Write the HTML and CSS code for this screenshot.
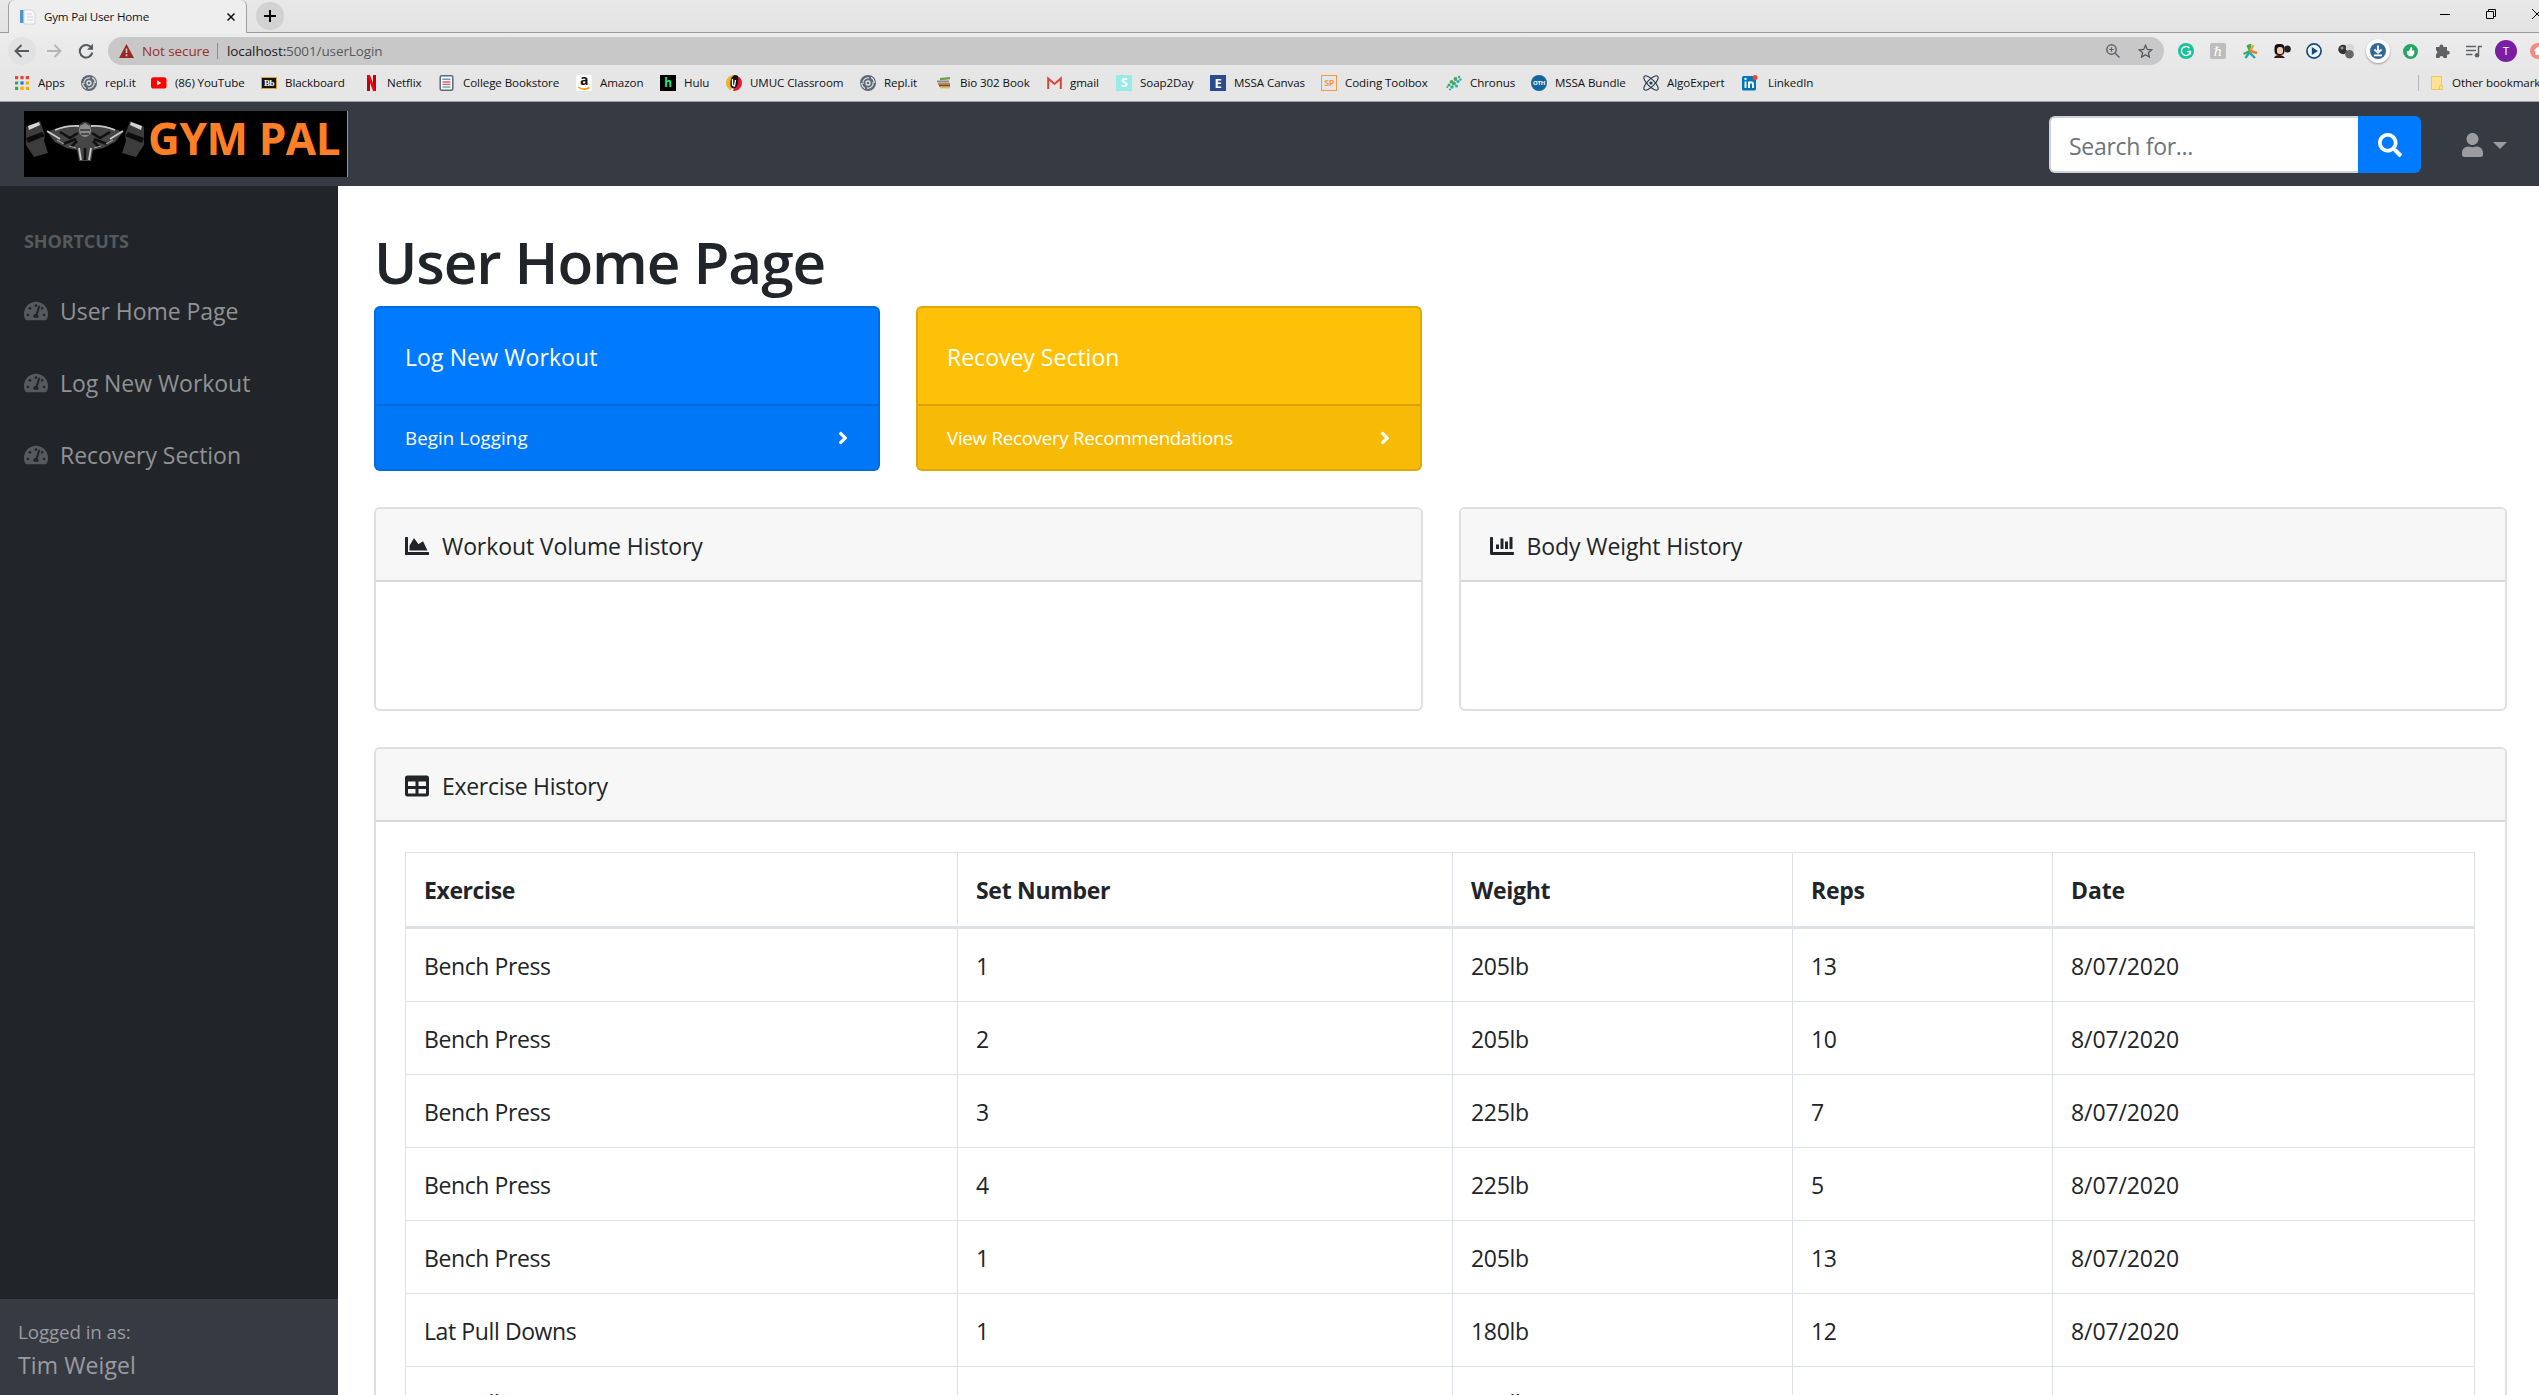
FILE: index.html
```html
<!DOCTYPE html>
<html lang="en">
<head>
<meta charset="utf-8">
<title>Gym Pal User Home</title>
<link rel="stylesheet" href="styles.css">
</head>
<body>
<svg class="defs" width="0" height="0">
  <symbol id="gauge" viewBox="0 0 576 512">
    <path fill="currentColor" d="M288 32C128.94 32 0 160.94 0 320c0 52.8 14.25 102.26 39.06 144.8 5.61 9.62 16.3 15.2 27.44 15.2h443c11.14 0 21.83-5.58 27.44-15.2C561.75 422.26 576 372.8 576 320c0-159.06-128.94-288-288-288z"/>
    <g fill="#212529"><circle cx="288" cy="128" r="32"/><circle cx="144" cy="192" r="32"/><circle cx="96" cy="352" r="32"/><circle cx="480" cy="352" r="32"/><circle cx="434" cy="192" r="30"/><path d="M364 128c12-4 28 4 24 22l-57 188c20 14 24 50 10 78H235c-26-44 0-94 50-96l58-182c3-6 9-9 21-10z"/></g>
  </symbol>
  <symbol id="angle" viewBox="0 0 256 512"><path fill="currentColor" d="M224.3 273l-136 136c-9.4 9.4-24.6 9.4-33.9 0l-22.6-22.6c-9.4-9.4-9.4-24.6 0-33.9l96.4-96.4-96.4-96.4c-9.4-9.4-9.4-24.6 0-33.9L54.3 103c9.4-9.4 24.6-9.4 33.9 0l136 136c9.5 9.4 9.5 24.6.1 34z"/></symbol>
  <symbol id="replit" viewBox="0 0 16 16"><circle cx="8" cy="8" r="8" fill="#5d6a75"/><circle cx="8" cy="8" r="2" fill="none" stroke="#e6e6e6" stroke-width="1.3"/><path d="M3 9a5 5 0 0 1 6-6M13 7a5 5 0 0 1-6 6M5 13.5A7 7 0 0 1 1.5 8M11 2.5A7 7 0 0 1 14.5 8" fill="none" stroke="#dde0e2" stroke-width="1.1"/></symbol>
</svg>

<div class="browser">
  <div class="tabstrip">
    <div class="tab">
      <svg width="16" height="16" viewBox="0 0 16 16"><path d="M4 1h8l3 3v11H4z" fill="#f7f8fa" stroke="#c9ccd6" stroke-width=".8"/><path d="M0 1h3.4v13H0z" fill="#4d97c9"/><path d="M7 5h5M7 8h6M7 11h6" stroke="#cdd3e0"/></svg>
      <span class="tab-title">Gym Pal User Home</span>
      <svg class="tab-close" width="8" height="8" viewBox="0 0 8 8"><path d="M.5.5l7 7M7.5.5l-7 7" stroke="#111" stroke-width="1.5"/></svg>
    </div>
    <div class="newtab"><svg width="12" height="12" viewBox="0 0 12 12"><path d="M6 0v12M0 6h12" stroke="#000" stroke-width="2"/></svg></div>
    <div class="wincontrols">
      <span><svg width="10" height="10" viewBox="0 0 10 10"><path d="M0 5.5h10" stroke="#000"/></svg></span>
      <span><svg width="10" height="10" viewBox="0 0 10 10"><path d="M.5 2.5h7v7h-7zM2.5 2.500V.5h7v7h-2" fill="none" stroke="#000"/></svg></span>
      <span><svg width="10" height="10" viewBox="0 0 10 10"><path d="M0 0l10 10M10 0L0 10" stroke="#000"/></svg></span>
    </div>
  </div>
  <div class="toolbar">
    <div class="nav-btn hot"><svg width="16" height="14" viewBox="0 0 16 14"><path d="M15 7H2M7.500 1L1.500 7l6 6" fill="none" stroke="#555a5e" stroke-width="1.900"/></svg></div>
    <div class="nav-btn"><svg width="16" height="14" viewBox="0 0 16 14"><path d="M1 7h13M8.500 1l6 6-6 6" fill="none" stroke="#b5b5b5" stroke-width="1.900"/></svg></div>
    <div class="nav-btn"><svg width="16" height="16" viewBox="0 0 16 16"><path d="M13.500 5A6.300 6.300 0 1 0 14.300 9.500" fill="none" stroke="#555a5e" stroke-width="2"/><path d="M15 .8v6H9z" fill="#555a5e"/></svg></div>
    <div class="urlbar">
      <svg width="15" height="14" viewBox="0 0 15 14"><path d="M7.500 0L15 14H0z" fill="#9b2820"/><path d="M7.500 4.500v4.500M7.500 10.300v1.900" stroke="#c9c9c9" stroke-width="1.600"/></svg>
      <span class="notsecure">Not secure</span>
      <i class="url-sep"></i>
      <span class="url"><b>localhost:</b>5001/userLogin</span>
      <svg class="url-zoom" width="14" height="14" viewBox="0 0 14 14"><g fill="none" stroke="#5f6368" stroke-width="1.500"><circle cx="5.500" cy="5.500" r="4.700"/><path d="M9 9l4.500 4.500"/><path d="M3.200 5.500h4.600M5.500 3.200v4.600" stroke-width="1.200"/></g></svg>
      <svg class="url-star" width="15" height="14" viewBox="0 0 15 14"><path d="M7.500 1.300l1.800 4.100 4.500.4-3.400 3 1 4.300-3.900-2.300-3.900 2.300 1-4.300-3.400-3 4.500-.4z" fill="none" stroke="#55595e" stroke-width="1.300"/></svg>
    </div>
    <div class="extensions">
      <span><svg width="16" height="16" viewBox="0 0 16 16"><circle cx="8" cy="8" r="8" fill="#15c39a"/><path d="M11.500 5.200a4.500 4.500 0 1 0 .9 3.300H9M12.400 8.500v3" fill="none" stroke="#fff" stroke-width="1.400"/></svg></span>
      <span class="ext-h">ℏ</span>
      <span><svg width="16" height="16" viewBox="0 0 16 16"><g fill="none" stroke-width="2.400"><path d="M8 9V1M8 8L5.500 2" stroke="#3daa53"/><path d="M8 8l3.500-6" stroke="#f2a233"/><path d="M8 8l-6.500 3" stroke="#57a639"/><path d="M8 8l7 2" stroke="#f07c26"/><path d="M7.500 9l-4 6M8 10l5 5" stroke="#1ba9b5"/></g></svg></span>
      <span><svg width="17" height="16" viewBox="0 0 17 16"><rect x=".5" y="1" width="10" height="11" rx="4" fill="#111"/><rect x="3" y="4" width="6" height="7" rx="2.500" fill="#f4c9b2"/><path d="M0 15q1-3 5-3t6 3z" fill="#3c1111"/><ellipse cx="13.500" cy="6" rx="3.300" ry="3.500" fill="#222"/></svg></span>
      <span><svg width="16" height="16" viewBox="0 0 16 16"><circle cx="8" cy="8" r="7.100" fill="#eef5fb" stroke="#164a80" stroke-width="1.700"/><path d="M5.800 4L12 8l-6.200 4z" fill="#164a80"/></svg></span>
      <span><svg width="17" height="16" viewBox="0 0 17 16"><circle cx="5" cy="6.500" r="4.700" fill="#333"/><circle cx="12" cy="5" r="4.300" fill="#d7d7d7"/><circle cx="11.500" cy="11.300" r="4.300" fill="#666"/><circle cx="4" cy="5" r="1.500" fill="#999"/></svg></span>
      <span class="ext-dl"><svg width="16" height="16" viewBox="0 0 16 16"><circle cx="8" cy="8" r="8" fill="#33679a"/><path d="M8 2.500V8M4.500 6.500L8 9.800l3.500-3.300M4 12.300h8" fill="none" stroke="#fff" stroke-width="1.800"/></svg></span>
      <span><svg width="15" height="15" viewBox="0 0 16 16"><circle cx="8" cy="8" r="8" fill="#27a567"/><path d="M4.500 7.500h2L8.500 3l1.400 1-.4 2.800h2.500v3L10.500 13H6.500L4.500 11z" fill="#fff"/></svg></span>
      <span><svg width="15" height="16" viewBox="0 0 15 16"><path d="M1 4h3.500a2 2 0 1 1 3.800 0H12v3.800a2 2 0 1 1 0 3.700V15H8.500a2 2 0 0 0-4 0H1v-4a2 2 0 0 0 0-3.700z" fill="#5f6368"/></svg></span>
      <span><svg width="16" height="13" viewBox="0 0 16 13"><path d="M0 1.500h10M0 5.500h10M0 9.500h6.500M16 1.500h-3.500v8" fill="none" stroke="#5f6368" stroke-width="1.500"/><circle cx="11" cy="10.200" r="2.300" fill="#5f6368"/></svg></span>
      <span><i class="avatar">T</i></span>
      <span><svg width="16" height="16" viewBox="0 0 16 16"><circle cx="8" cy="8" r="8" fill="#f28b82"/><path d="M8 3.500l4.500 4.500h-2v4h-5V8h-2z" fill="#fff"/></svg></span>
    </div>
  </div>
  <div class="bookmarks">
    <a><svg width="14" height="14" viewBox="0 0 14 14"><path d="M0 0h3.200v3.200H0zM5.400 0h3.200v3.200H5.400zM10.800 0H14v3.200h-3.200z" fill="#ea4335"/><path d="M0 5.400h3.200v3.200H0zM0 10.800h3.200V14H0z" fill="#34a853"/><path d="M5.400 5.400h3.200v3.200H5.400z" fill="#1a73e8"/><path d="M10.800 5.400H14v3.200h-3.200zM5.400 10.800h3.200V14H5.400zM10.800 10.800H14V14h-3.200z" fill="#f9ab00"/></svg><span>Apps</span></a>
    <a><svg width="16" height="16"><use href="#replit"/></svg><span>repl.it</span></a>
    <a><svg width="16" height="16" viewBox="0 0 16 16"><rect y="2.200" width="15.500" height="11.300" rx="2.600" fill="#f00"/><path d="M6.200 5.200L10.300 8l-4.100 2.600z" fill="#fff"/></svg><span>(86) YouTube</span></a>
    <a><i class="ico ico-bb">Bb</i><span>Blackboard</span></a>
    <a><svg width="16" height="16" viewBox="0 0 16 16"><path d="M4 0h3v16H4zM10 0h3v16h-3z" fill="#b20710"/><path d="M4 0h3l6 16h-3z" fill="#e50914"/></svg><span>Netflix</span></a>
    <a><svg width="16" height="16" viewBox="0 0 16 16"><rect x="1.200" y=".8" width="12.600" height="14.400" rx="1.500" fill="#fff" stroke="#566a7c" stroke-width="1.500"/><path d="M3.500 4.200h8" stroke="#4c8ac9" stroke-width="1.300"/><path d="M3.500 7h8M3.500 9.300h8" stroke="#e0566b" stroke-width="1.300"/><path d="M3.500 12h8" stroke="#44a37a" stroke-width="1.300"/></svg><span>College Bookstore</span></a>
    <a><i class="ico ico-amz">a<svg width="14" height="5" viewBox="0 0 14 5"><path d="M1 1q6 4 11.500.5" fill="none" stroke="#f90" stroke-width="1.500"/></svg></i><span>Amazon</span></a>
    <a><i class="ico ico-hulu">h</i><span>Hulu</span></a>
    <a><svg width="16" height="16" viewBox="0 0 16 16"><path d="M8 0a8 8 0 0 0-3 15.400L9 0z" fill="#f0b323"/><path d="M8 16A8 8 0 0 0 12.500 1.500L7 16z" fill="#e21836"/><path d="M9 0C5 1 4 6 4.500 11c1 3 4 3 6 1 2-3 2-8 1.500-11q-1-1-3-1z" fill="#151515"/><path d="M6.500 4v5q0 2 2 2l1-6" fill="none" stroke="#fff" stroke-width="1.300"/></svg><span>UMUC Classroom</span></a>
    <a><svg width="16" height="16"><use href="#replit"/></svg><span>Repl.it</span></a>
    <a><svg width="16" height="16" viewBox="0 0 16 16"><path d="M4 4.200l10-1" stroke="#67a046" stroke-width="2.200"/><path d="M1 6.500h12" stroke="#8a8a8a" stroke-width="2"/><path d="M2 9h12" stroke="#c05c28" stroke-width="1.600"/><path d="M3 10.800h11" stroke="#555" stroke-width="1.600"/><path d="M4 12.500h10" stroke="#e3b83c" stroke-width="1.800"/></svg><span>Bio 302 Book</span></a>
    <a><svg width="15" height="16" viewBox="0 0 15 16"><path d="M1 3h13v11H1z" fill="#e9e6e6"/><path d="M1.200 14V3.500L7.500 9l6.300-5.500V14" fill="none" stroke="#db4437" stroke-width="2"/></svg><span>gmail</span></a>
    <a><i class="ico ico-soap">S</i><span>Soap2Day</span></a>
    <a><i class="ico ico-e">E</i><span>MSSA Canvas</span></a>
    <a><i class="ico ico-sp">SP</i><span>Coding Toolbox</span></a>
    <a><svg width="16" height="16" viewBox="0 0 16 16"><g fill="#4aa564"><circle cx="9.500" cy="4" r="1.900"/><circle cx="5.500" cy="6.800" r="1.900"/><circle cx="8" cy="8.500" r="1.900"/><circle cx="3" cy="10" r="1.500"/><circle cx="1.300" cy="12" r="1"/><circle cx="13" cy="2" r="1.200"/></g><g fill="#17b8b4"><circle cx="12" cy="6.500" r="1.600"/><circle cx="14.500" cy="4.500" r="1.200"/><circle cx="6" cy="12" r="1.700"/><circle cx="10.500" cy="11" r="1.500"/><circle cx="4" cy="14.500" r="1.100"/></g></svg><span>Chronus</span></a>
    <a><i class="ico ico-oth">OTH</i><span>MSSA Bundle</span></a>
    <a><svg width="16" height="16" viewBox="0 0 16 16"><g fill="none" stroke="#24364b" stroke-width="1.100"><ellipse cx="8" cy="8" rx="9.500" ry="3.500" transform="rotate(45 8 8)"/><ellipse cx="8" cy="8" rx="9.500" ry="3.500" transform="rotate(-45 8 8)"/></g><circle cx="8" cy="8" r="1.600" fill="#24364b"/></svg><span>AlgoExpert</span></a>
    <a class="bm-li"><svg width="16" height="16" viewBox="0 0 16 16"><rect y="1" width="14" height="14.500" rx="1.500" fill="#0077b5"/><path d="M3.500 6.500v6.500M7 13V6.500M7 9.500q0-2.200 2-2.200t2 2.200V13" fill="none" stroke="#fff" stroke-width="1.900"/><circle cx="3.500" cy="4" r="1.200" fill="#fff"/><circle cx="13" cy="2.500" r="2.500" fill="#f44336"/></svg><span>LinkedIn</span></a>
    <a class="bm-other"><svg width="12" height="14" viewBox="0 0 12 14"><path d="M.5.5h10v13H.5z" fill="#fde293" stroke="#efc94f"/><path d="M8.500 13.500v-4h2.700v4z" fill="#fde293" stroke="#efc94f"/></svg><span>Other bookmarks</span></a>
  </div>
</div>

<header class="topnav">
  <div class="brand">
    <svg width="120" height="44" viewBox="0 0 120 44">
      <g fill="#3c3c3c"><path d="M1 7L15 1l5 14-1 6 4 12-14 4L1 25z"/><path d="M119 7L105 1l-5 14 1 6-4 12 14 4 8-12z"/></g>
      <path d="M3 6L14 2l1 3L4 10zM117 6L106 2l-1 3 11 5z" fill="#d5d5d5"/>
      <path d="M1 18l16-6 3 4-17 7zM119 18l-16-6-3 4 17 7z" fill="#0c0c0c"/>
      <path d="M22 12l14-5 17-1q7-8 14 0l17 1 14 5-8 10-12 6-10 2-2 11H54l-2-11-10-2-12-6z" fill="#454545"/>
      <path d="M22 11l13 8M98 11l-13 8M30 10q12-5 24-4M90 10q-12-5-24-4M54 28l2 12M66 28l-2 12" fill="none" stroke="#c8c8c8" stroke-width="1.800"/>
      <path d="M35 12l10 6 8-5M85 12l-10 6-8-5M38 24l13-5M82 24l-13-5M60 28v12M46 27l6-6M74 27l-6-6" fill="none" stroke="#101010" stroke-width="2.600"/>
      <path d="M32 20l7 4M88 20l-7 4M44 26l7 2M76 26l-7 2" fill="none" stroke="#999" stroke-width="1.200"/>
      <ellipse cx="60" cy="10" rx="6" ry="7" fill="#8a8a8a"/><path d="M56 5l4-3 4 3M55 10h10M56 14h8" fill="none" stroke="#3a3a3a" stroke-width="1.400"/>
    </svg>
    <span>GYM PAL</span>
  </div>
  <div class="search">
    <div class="search-input">Search for...</div>
    <div class="search-btn"><svg width="24" height="24" viewBox="0 0 512 512"><path fill="#fff" d="M505 442.700L405.300 343c-4.500-4.500-10.600-7-17-7H372c27.600-35.300 44-79.700 44-128C416 93.100 322.900 0 208 0S0 93.100 0 208s93.100 208 208 208c48.300 0 92.700-16.400 128-44v16.300c0 6.400 2.500 12.500 7 17l99.700 99.700c9.400 9.400 24.600 9.400 33.900 0l28.300-28.300c9.400-9.400 9.400-24.600.1-34zM208 336c-70.700 0-128-57.200-128-128 0-70.700 57.200-128 128-128 70.700 0 128 57.200 128 128 0 70.700-57.200 128-128 128z"/></svg></div>
  </div>
  <div class="usermenu">
    <svg width="21" height="24" viewBox="0 0 448 512"><path fill="currentColor" d="M224 256c70.700 0 128-57.300 128-128S294.700 0 224 0 96 57.300 96 128s57.300 128 128 128zm89.600 32h-16.700c-22.200 10.200-46.900 16-72.900 16s-50.600-5.800-72.900-16h-16.700C60.200 288 0 348.200 0 422.400V464c0 26.500 21.500 48 48 48h352c26.500 0 48-21.500 48-48v-41.600c0-74.200-60.200-134.400-134.400-134.400z"/></svg>
    <i class="caret"></i>
  </div>
</header>

<div class="layout">
  <nav class="sidebar">
    <div class="side-heading">SHORTCUTS</div>
    <a class="side-link"><svg width="24" height="22"><use href="#gauge"/></svg><span>User Home Page</span></a>
    <a class="side-link"><svg width="24" height="22"><use href="#gauge"/></svg><span>Log New Workout</span></a>
    <a class="side-link"><svg width="24" height="22"><use href="#gauge"/></svg><span>Recovery Section</span></a>
    <div class="side-footer"><div class="small">Logged in as:</div><div class="who">Tim Weigel</div></div>
  </nav>
  <main class="content">
    <h1>User Home Page</h1>
    <div class="tiles">
      <div class="tile blue"><div class="tile-body">Log New Workout</div><div class="tile-foot"><span>Begin Logging</span><svg width="10" height="20"><use href="#angle"/></svg></div></div>
      <div class="tile yellow"><div class="tile-body">Recovey Section</div><div class="tile-foot"><span>View Recovery Recommendations</span><svg width="10" height="20"><use href="#angle"/></svg></div></div>
    </div>
    <div class="charts">
      <section class="card"><div class="card-head"><svg width="24" height="24" viewBox="0 0 512 512"><path d="M500 384c6.600 0 12 5.400 12 12v40c0 6.600-5.400 12-12 12H12c-6.600 0-12-5.400-12-12V76c0-6.600 5.400-12 12-12h40c6.600 0 12 5.400 12 12v308h436zM372.700 159.500L288 216l-85.300-113.700c-5.100-6.800-15.500-6.300-19.900 1L96 248v104h384l-89.900-187.800c-3.200-6.500-11.400-8.700-17.400-4.700z"/></svg><span>Workout Volume History</span></div><div class="chart-body"></div></section>
      <section class="card"><div class="card-head"><svg width="24" height="24" viewBox="0 0 512 512"><path d="M496 384H64V80c0-8.800-7.200-16-16-16H16C7.200 64 0 71.200 0 80v336c0 17.700 14.300 32 32 32h464c8.800 0 16-7.200 16-16v-32c0-8.800-7.200-16-16-16z"/><path d="M128 224h64v96h-64zM224 96h64v224h-64zM320 160h64v160h-64zM416 64h64v256h-64z"/></svg><span>Body Weight History</span></div><div class="chart-body"></div></section>
    </div>
    <section class="card"><div class="card-head last"><svg width="24" height="24" viewBox="0 0 512 512"><path d="M464 32H48C21.490 32 0 53.490 0 80v352c0 26.510 21.490 48 48 48h416c26.510 0 48-21.490 48-48V80c0-26.510-21.490-48-48-48zM224 416H64v-96h160v96zm0-160H64v-96h160v96zm224 160H288v-96h160v96zm0-160H288v-96h160v96z"/></svg><span>Exercise History</span></div>
      <div class="table-body">
        <div class="row head"><div>Exercise</div><div>Set Number</div><div>Weight</div><div>Reps</div><div>Date</div></div>
        <div class="row"><div>Bench Press</div><div>1</div><div>205lb</div><div>13</div><div>8/07/2020</div></div>
        <div class="row"><div>Bench Press</div><div>2</div><div>205lb</div><div>10</div><div>8/07/2020</div></div>
        <div class="row"><div>Bench Press</div><div>3</div><div>225lb</div><div>7</div><div>8/07/2020</div></div>
        <div class="row"><div>Bench Press</div><div>4</div><div>225lb</div><div>5</div><div>8/07/2020</div></div>
        <div class="row"><div>Bench Press</div><div>1</div><div>205lb</div><div>13</div><div>8/07/2020</div></div>
        <div class="row"><div>Lat Pull Downs</div><div>1</div><div>180lb</div><div>12</div><div>8/07/2020</div></div>
        <div class="row tail"><div>Lat Pull Downs</div><div>2</div><div>180lb</div><div>12</div><div>8/07/2020</div></div>
      </div>
    </section>
  </main>
</div>
</body>
</html>
```
FILE: styles.css
```css
* { box-sizing: border-box; }
html, body { margin: 0; height: 1395px; overflow: hidden; }
body { font-family: "Open Sans", "Noto Sans", sans-serif; font-size: 23px; line-height: 36px; letter-spacing: -0.3px; color: #212529; background: #fff; width: 2539px; }
svg { display: block; flex: none; }
.defs { position: absolute; }
i { font-style: normal; }

/* Browser chrome */
.browser { height: 102px; background: #e6e6e6; border-bottom: 1px solid #a3a3a3; font-size: 11.6px; line-height: 16px; color: #111; letter-spacing: -0.1px; overflow: hidden; }
.tabstrip { display: flex; height: 33px; border-bottom: 1px solid #9a9a9a; background: linear-gradient(#e8e8e8, #e3e3e3); }
.tab { display: flex; align-items: center; width: 239px; height: 33px; margin-left: 8px; padding: 0 11px 0 11px; border: 1px solid #a0a0a0; border-width: 0 1px; border-radius: 6px 6px 0 0; background: #eee; }
.tab-title { margin-left: 8px; flex: 1; letter-spacing: -0.2px; }
.newtab { width: 28px; height: 28px; margin: 2px 0 0 9px; border-radius: 50%; background: #d2d2d2; display: flex; align-items: center; justify-content: center; }
.wincontrols { display: flex; flex: none; margin-left: auto; margin-right: -21px; height: 27px; }
.wincontrols span { width: 46px; display: flex; align-items: center; justify-content: center; }
.toolbar { display: flex; align-items: center; height: 36px; background: linear-gradient(#ececec, #e7e7e7); padding-left: 8px; }
.nav-btn { flex: none; width: 28px; height: 28px; margin-right: 4px; border-radius: 50%; display: flex; align-items: center; justify-content: center; }
.hot { background: #e2e2e2; }
.urlbar { display: flex; align-items: center; width: 2056px; height: 28px; margin-left: 4px; padding: 0 11px; border-radius: 14px; background: #c8c8c8; font-size: 13.5px; flex: none; }
.notsecure { margin-left: 8px; color: #98302a; width: 75px; }
.url-sep { width: 1px; height: 16px; background: #8a8a8a; margin-right: 9px; }
.url { color: #55595e; flex: 1; }
.url b { font-weight: 400; color: #1b1b1b; }
.url-star { margin: 0 0 0 18px; }
.extensions { display: flex; flex: none; margin-left: 6px; }
.extensions span { width: 32px; height: 28px; display: flex; align-items: center; justify-content: center; }
.extensions .ext-h { width: 16px; height: 16px; margin: 6px 8px; border-radius: 2px; background: #bdbdbd; color: #fff; font: 13px "DejaVu Serif", serif; }
.extensions .ext-dl { width: 24px; height: 24px; margin: 2px 4px; border-radius: 50%; background: #fff; box-shadow: 0 1px 2px #999; }
.avatar { width: 22px; height: 22px; border-radius: 50%; background: #7b1fa2; color: #fff; text-align: center; line-height: 22px; }
.bookmarks { display: grid; grid-template-columns: 66px 70px 110px 102px 76px 137px 84px 66px 134px 76px 111px 69px 94px 111px 125px 85px 112px 99px 676px 200px; height: 33px; margin-left: 15px; align-items: center; padding-bottom: 5px; }
.bookmarks a { display: flex; align-items: center; white-space: nowrap; height: 16px; }
.bookmarks a span { margin-left: 8px; }
.bookmarks a:first-child span { margin-left: 9px; }
.bookmarks .bm-li span { margin-left: 10px; }
.bookmarks .bm-other { border-left: 1px solid #b5b5b5; padding-left: 12px; }
.bookmarks .bm-other span { margin-left: 9px; }
.ico { width: 16px; height: 16px; flex: none; font-weight: 700; text-align: center; letter-spacing: -0.5px; line-height: 16px; color: #fff; }
.ico-bb { height: 12px; background: #141414; border: 1px solid #e0a030; font: 700 9px/10px "Liberation Serif", serif; }
.ico-amz { background: #fff; color: #111; line-height: 10px; font-size: 14px; border-radius: 2px; }
.ico-amz svg { margin: 1px auto 0; }
.ico-hulu { background: #000; color: #1ce783; font-size: 12px; }
.ico-soap { background: #97ebe6; font-size: 12px; }
.ico-e { background: #2b4a8f; font-size: 13px; }
.ico-sp { border: 1.5px solid #f59a4a; color: #f59a4a; font-size: 9px; line-height: 13px; }
.ico-oth { border-radius: 50%; background: #15669c; font-size: 6px; letter-spacing: -0.2px; }

/* Top navigation */
.topnav { display: flex; align-items: center; height: 84px; padding-left: 24px; background: #363a42; }
.brand { display: flex; width: 324px; height: 66px; padding-left: 1px; background: #000; border-right: 1px solid #999; color: #ff7f27; }
.brand svg { margin-top: 9px; }
.brand span { margin-left: 3px; font-size: 44px; line-height: 55px; font-weight: 700; letter-spacing: -0.4px; white-space: nowrap; }
.search { display: flex; width: 372px; height: 57px; margin-left: 1701px; }
.search-input { width: 309px; border: 2px solid #ced4da; border-right: 0; border-radius: 6px 0 0 6px; background: #fff; color: #6c757d; padding: 10px 18px 8px; }
.search-btn { width: 63px; padding-top: 1px; border-radius: 0 6px 6px 0; background: #007bff; display: flex; align-items: center; justify-content: center; }
.usermenu { display: flex; align-items: center; margin-left: 41px; padding-top: 2px; color: #9a9c9f; }
.caret { margin-left: 10px; border: 7px solid transparent; border-top-color: currentColor; border-bottom: 0; }

/* Layout */
.layout { display: flex; height: 1209px; }
.sidebar { width: 338px; flex: none; display: flex; flex-direction: column; background: #212529; color: #909294; letter-spacing: 0; }
.side-heading { padding: 42px 24px 0; height: 89px; font-size: 18px; line-height: 27px; font-weight: 700; letter-spacing: -0.1px; color: #565a5d; }
.side-link { display: flex; align-items: center; height: 72px; padding-left: 24px; letter-spacing: -0.05px; }
.side-link svg { color: #565a5d; margin-right: 12px; }
.side-footer { margin-top: auto; height: 96px; padding: 19px 18px 0; background: #363a42; color: #9a9c9f; }
.small { font-size: 18.8px; line-height: 29px; letter-spacing: -0.1px; }
.who { letter-spacing: 0.1px; }
.content { flex: none; width: 2169px; padding: 36px 0 0 36px; }
h1 { margin: 0; height: 84px; padding-top: 3px; font-size: 58.5px; line-height: 72px; font-weight: 600; letter-spacing: -1.1px; }
.tiles, .charts { display: flex; gap: 36px; margin-bottom: 36px; }
.tile { width: 506px; height: 165px; border: 2px solid rgba(0,0,0,.125); border-radius: 6px; color: #fff; letter-spacing: 0.1px; overflow: hidden; }
.blue { background-color: #007bff; }
.yellow { background-color: #ffc107; }
.yellow .tile-body { letter-spacing: 0; }
.tile-body { height: 96px; padding: 31px 29px 0; }
.tile-foot { display: flex; align-items: center; justify-content: space-between; height: 65px; padding: 1px 30px 0 29px; font-size: 18.700px; background: rgba(0,0,0,.03); border-top: 2px solid rgba(0,0,0,.125); }
.yellow .tile-foot { letter-spacing: -0.25px; }
.card { flex: 1; border: 2px solid #dfdfdf; border-radius: 6px; overflow: hidden; background: #fff; }
.card-head { display: flex; align-items: center; height: 73px; padding: 2px 0 0 29px; background: #f7f7f7; border-bottom: 2px solid #d8d8d8; letter-spacing: -0.1px; }
.card-head.last { letter-spacing: -0.3px; }
.card-head svg { margin-right: 13px; fill: #212529; }
.chart-body { height: 127px; }
.table-body { padding: 30px 30px 0 29px; width: 2129px; }
.row { display: grid; grid-template-columns: 552px 495px 340px 260px 422px; width: 2070px; height: 73px; border-bottom: 1px solid #dee2e6; border-left: 1px solid #dee2e6; }
.row > div { padding: 19px 18px 0; border-right: 1px solid #dee2e6; }
.row > div:first-child { letter-spacing: -0.4px; }
.row > div:last-child { letter-spacing: -0.1px; }
.row.head { height: 77px; border-top: 1px solid #dee2e6; border-bottom: 3px solid #dee2e6; font-weight: 700; }
.row.tail > div { padding-top: 18px; }
```
